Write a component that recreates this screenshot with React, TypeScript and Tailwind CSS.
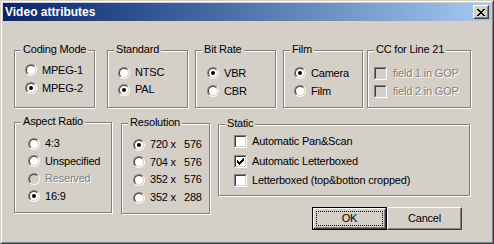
import React from 'react';

// Win classic "Video attributes" dialog

const FONT = "font-['Liberation_Sans',Arial,sans-serif]";

function GroupBox({ label, className, children }: { label: string; className: string; children: React.ReactNode }) {
  return (
    <div className={`relative border border-[#808080] shadow-[inset_1px_1px_0_#fff,1px_1px_0_#fff] ${className}`}>
      <span className="absolute left-[6px] top-[-8px] px-[2px] bg-[#D4D0C8] leading-[13px] text-black">{label}</span>
      {children}
    </div>
  );
}

function Radio({ checked, disabled }: { checked?: boolean; disabled?: boolean }) {
  return (
    <span className="w-[12px] h-[12px] rounded-full border border-t-[#808080] border-l-[#808080] border-r-white border-b-white flex-shrink-0 flex">
      <span
        className={`flex-1 rounded-full border border-t-[#404040] border-l-[#404040] border-r-[#D4D0C8] border-b-[#D4D0C8] flex items-center justify-center ${
          disabled ? 'bg-[#D4D0C8]' : 'bg-white'
        }`}
      >
        {checked && <span className="w-[4px] h-[4px] rounded-full bg-black" />}
      </span>
    </span>
  );
}

function Check({ checked, disabled }: { checked?: boolean; disabled?: boolean }) {
  return (
    <span className="w-[13px] h-[13px] border border-t-[#808080] border-l-[#808080] border-r-white border-b-white flex-shrink-0 flex">
      <span
        className={`flex-1 border border-t-[#404040] border-l-[#404040] border-r-[#D4D0C8] border-b-[#D4D0C8] flex items-center justify-center ${
          disabled ? 'bg-[#D4D0C8]' : 'bg-white'
        }`}
      >
        {checked && (
          <svg width="7" height="7" viewBox="0 0 7 7" shapeRendering="crispEdges">
            <path
              d="M0 2h1v3H0z M1 3h1v3H1z M2 4h1v3H2z M3 3h1v3H3z M4 2h1v3H4z M5 1h1v3H5z M6 0h1v3H6z"
              fill="#000"
            />
          </svg>
        )}
      </span>
    </span>
  );
}

function RadioRow({ label, checked, disabled, h = 'h-[18px]' }: { label: React.ReactNode; checked?: boolean; disabled?: boolean; h?: string }) {
  return (
    <div className={`flex items-center gap-[5px] ${h}`}>
      <Radio checked={checked} disabled={disabled} />
      <span className={disabled ? 'text-[#808080] [text-shadow:1px_1px_0_#fff]' : 'text-black'}>{label}</span>
    </div>
  );
}

function CheckRow({ label, checked, disabled, h = 'h-[18px]', gap = 'gap-[5px]' }: { label: string; checked?: boolean; disabled?: boolean; h?: string; gap?: string }) {
  return (
    <div className={`flex items-center ${gap} ${h}`}>
      <Check checked={checked} disabled={disabled} />
      <span className={disabled ? 'text-[#808080] [text-shadow:1px_1px_0_#fff]' : 'text-black'}>{label}</span>
    </div>
  );
}

function Res({ a, b }: { a: string; b: string }) {
  return (
    <span className="flex">
      <span className="w-[34px]">{a} x</span>
      <span>{b}</span>
    </span>
  );
}

function Button({ label, isDefault }: { label: string; isDefault?: boolean }) {
  const face = (
    <span className="flex-1 flex border border-t-white border-l-white border-r-[#404040] border-b-[#404040]">
      <span className="flex-1 flex border border-t-[#D4D0C8] border-l-[#D4D0C8] border-r-[#808080] border-b-[#808080] p-[1px]">
        <span className={`flex-1 flex items-center justify-center ${isDefault ? 'outline outline-1 outline-dotted outline-black -outline-offset-1' : ''}`}>
          {label}
        </span>
      </span>
    </span>
  );
  return (
    <button type="button" className={`w-[75px] h-[23px] flex bg-[#D4D0C8] text-black ${isDefault ? 'border border-black' : ''}`}>
      {face}
    </button>
  );
}

export default function App() {
  return (
    <div className={`w-[494px] h-[244px] flex border border-t-[#D4D0C8] border-l-[#D4D0C8] border-r-[#404040] border-b-[#404040] ${FONT} text-[11px] leading-[13px] tracking-[-0.2px]`}>
      <div className="flex-1 flex flex-col border border-t-white border-l-white border-r-[#808080] border-b-[#808080] bg-[#D4D0C8] p-[1px]">
        {/* title bar */}
        <div className="h-[18px] flex items-center bg-gradient-to-r from-[#0A246A] to-[#A6CAF0] pl-[2px] pr-[2px]">
          <span className="flex-1 text-white font-bold text-[12px] leading-[14px] tracking-normal">Video attributes</span>
          <span className="w-[16px] h-[14px] flex bg-[#D4D0C8] border border-t-white border-l-white border-r-[#404040] border-b-[#404040]">
            <span className="flex-1 flex items-center justify-center border border-t-[#D4D0C8] border-l-[#D4D0C8] border-r-[#808080] border-b-[#808080]">
              <svg width="8" height="7" viewBox="0 0 8 7" shapeRendering="crispEdges">
                <path
                  d="M0 0h2v1H0z M6 0h2v1H6z M1 1h2v1H1z M5 1h2v1H5z M2 2h4v1H2z M3 3h2v1H3z M2 4h4v1H2z M1 5h2v1H1z M5 5h2v1H5z M0 6h2v1H0z M6 6h2v1H6z"
                  fill="#000"
                />
              </svg>
            </span>
          </span>
        </div>

        {/* first row of groups */}
        <div className="flex items-start mt-[29px]">
          <GroupBox label="Coding Mode" className="ml-[11px] w-[81px] h-[58px] pt-[10px] pl-[10px]">
            <RadioRow label="MPEG-1" />
            <RadioRow label="MPEG-2" checked />
          </GroupBox>
          <GroupBox label="Standard" className="ml-[12px] w-[81px] h-[58px] pt-[13px] pl-[10px]">
            <RadioRow label="NTSC" h="h-[17px]" />
            <RadioRow label="PAL" checked h="h-[17px]" />
          </GroupBox>
          <GroupBox label="Bit Rate" className="ml-[7px] w-[81px] h-[58px] pt-[13px] pl-[11px]">
            <RadioRow label="VBR" checked />
            <RadioRow label="CBR" />
          </GroupBox>
          <GroupBox label="Film" className="ml-[7px] w-[80px] h-[58px] pt-[13px] pl-[10px]">
            <RadioRow label="Camera" checked />
            <RadioRow label="Film" />
          </GroupBox>
          <GroupBox label="CC for Line 21" className="ml-[4px] w-[104px] h-[58px] pt-[13px] pl-[6px]">
            <CheckRow label="field 1 in GOP" disabled gap="gap-[6px]" />
            <CheckRow label="field 2 in GOP" disabled gap="gap-[6px]" />
          </GroupBox>
        </div>

        {/* second row */}
        <div className="flex items-start mt-[14px]">
          <GroupBox label="Aspect Ratio" className="ml-[11px] w-[98px] h-[91px] pt-[12px] pl-[13px]">
            <RadioRow label="4:3" h="h-[17.5px]" />
            <RadioRow label="Unspecified" h="h-[17.5px]" />
            <RadioRow label="Reserved" disabled h="h-[17.5px]" />
            <RadioRow label="16:9" checked h="h-[17.5px]" />
          </GroupBox>
          <GroupBox label="Resolution" className="ml-[9px] mt-[1px] w-[89px] h-[91px] pt-[12px] pl-[11px]">
            <RadioRow label={<Res a="720" b="576" />} checked h="h-[17.6px]" />
            <RadioRow label={<Res a="704" b="576" />} h="h-[17.6px]" />
            <RadioRow label={<Res a="352" b="576" />} h="h-[17.6px]" />
            <RadioRow label={<Res a="352" b="288" />} h="h-[17.6px]" />
          </GroupBox>
          <div className="ml-[8px] mt-[2px] flex flex-col">
            <GroupBox label="Static" className="w-[252px] h-[72px] pt-[7px] pl-[15px]">
              <CheckRow label="Automatic Pan&Scan" h="h-[19.5px]" />
              <CheckRow label="Automatic Letterboxed" checked h="h-[19px]" />
              <CheckRow label="Letterboxed (top&botton cropped)" h="h-[19px]" />
            </GroupBox>
            <div className="flex mt-[11px] ml-[94px]">
              <Button label="OK" isDefault />
              <Button label="Cancel" />
            </div>
          </div>
        </div>
      </div>
    </div>
  );
}
